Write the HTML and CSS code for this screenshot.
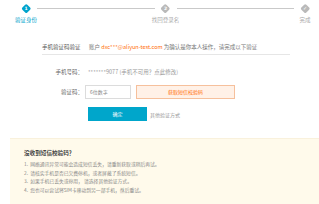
FILE: index.html
```html
<!DOCTYPE html>
<html lang="zh">
<head>
<meta charset="utf-8">
<link rel="stylesheet" href="styles.css">
</head>
<body>
<div class="page">
  <div class="steps">
    <div class="step active">
      <div class="dia"><span>1</span></div>
      <div class="lbl">验证身份</div>
    </div>
    <div class="line"></div>
    <div class="step">
      <div class="dia"><span>2</span></div>
      <div class="lbl">找回登录名</div>
    </div>
    <div class="line"></div>
    <div class="step">
      <div class="dia"><span class="chk">✓</span></div>
      <div class="lbl">完成</div>
    </div>
  </div>

  <div class="form">
    <div class="head">
      <span class="title">手机验证码验证</span>
      <span class="note">账户 <em>dxc***@aliyun-test.com</em> 为确认是你本人操作，请完成以下验证</span>
    </div>
    <div class="row phone">
      <span class="label">手机号码：</span>
      <span class="value">*******9077 (手机不可用？点此修改)</span>
    </div>
    <div class="row code">
      <span class="label">验证码：</span>
      <div class="input">6位数字</div>
      <div class="sms">获取短信校验码</div>
    </div>
    <div class="row submit">
      <span class="label"></span>
      <div class="ok">确定</div>
      <span class="other">其他验证方式</span>
    </div>
  </div>

  <div class="tips">
    <div class="tips-title">没收到短信校验码？</div>
    <ol class="tips-list">
      <li>1.&nbsp;&nbsp;网络通讯异常可能会造成短信丢失，请重新获取或稍后再试。</li>
      <li>2.&nbsp;&nbsp;请核实手机是否已欠费停机，或者屏蔽了系统短信。</li>
      <li>3.&nbsp;&nbsp;如果手机已丢失或停用， 请选择其他验证方式。</li>
      <li>4.&nbsp;&nbsp;您也可以尝试将SIM卡移动到另一部手机，然后重试。</li>
    </ol>
  </div>
</div>
</body>
</html>
```

FILE: styles.css
```css
html, body {
  margin: 0;
  padding: 0;
  background: #fff;
}
body {
  font-family: "Noto Sans CJK SC", "Noto Sans", sans-serif;
  color: #666;
  width: 319px;
  height: 204px;
  overflow: hidden;
}
.page {
  display: flex;
  flex-direction: column;
  height: 204px;
}

/* steps */
.steps {
  display: flex;
  align-items: flex-start;
  padding: 4px 3px 0 15px;
  height: 28px;
  box-sizing: border-box;
}
.step {
  width: 22px;
  display: flex;
  flex-direction: column;
  align-items: center;
}
.dia {
  width: 9px;
  height: 9px;
  display: flex;
  align-items: center;
  justify-content: center;
  position: relative;
}
.dia::before {
  content: "";
  width: 6.5px;
  height: 6.5px;
  border-radius: 1.5px;
  background: #b9b9b9;
  transform: rotate(45deg);
  position: absolute;
}
.step.active .dia::before {
  background: #00a3cc;
}
.dia span {
  position: relative;
  color: #fff;
  font-size: 4.5px;
  line-height: 5px;
  font-weight: bold;
  font-family: "DejaVu Sans", sans-serif;
}
.dia .chk {
  font-size: 5px;
}
.lbl {
  margin-top: 4px;
  font-size: 5.5px;
  line-height: 6px;
  white-space: nowrap;
  color: #aaa;
}
.step.active .lbl {
  color: #00a3cc;
}
.line {
  flex: 1;
  height: 1px;
  margin-top: 4px;
  background: #c9c9c9;
}

/* form */
.form {
  margin-left: 42px;
  width: 248px;
  display: flex;
  flex-direction: column;
}
.head {
  margin-top: 15px;
  padding-bottom: 3px;
  border-bottom: 1px solid #e6e6e6;
  display: flex;
  font-size: 5.5px;
  line-height: 8px;
  white-space: nowrap;
}
.title {
  color: #555;
  width: 47px;
}
.note {
  color: #777;
}
.note em {
  font-style: normal;
  color: #ff6a00;
}
.row {
  display: flex;
  align-items: center;
  font-size: 5.5px;
  white-space: nowrap;
}
.label {
  width: 41px;
  text-align: right;
  color: #666;
}
.phone {
  margin-top: 13px;
  line-height: 8px;
}
.phone .value {
  margin-left: 5px;
  color: #999;
}
.code {
  margin-top: 9px;
  height: 14px;
}
.input {
  margin-left: 2px;
  width: 46px;
  height: 14px;
  box-sizing: border-box;
  border: 1px solid #dcdcdc;
  padding-left: 4px;
  line-height: 12px;
  color: #888;
  font-size: 5px;
}
.sms {
  margin-left: 5px;
  width: 99px;
  height: 14px;
  box-sizing: border-box;
  border: 1px solid #f6c09c;
  background: #fff1e7;
  color: #ff6a00;
  font-size: 5px;
  line-height: 12px;
  text-align: center;
}
.submit {
  margin-top: 8px;
  height: 14px;
}
.ok {
  margin-left: 5px;
  width: 59px;
  height: 14px;
  background: #00a6cb;
  color: #fff;
  font-size: 5px;
  line-height: 14px;
  text-align: center;
}
.other {
  margin-left: 3px;
  color: #999;
  font-size: 5px;
}

/* tips */
.tips {
  margin-top: 17px;
  margin-left: 10px;
  flex: 1;
  background: #fffaeb;
  border-top: 1px solid #f9f1dc;
  padding: 10px 0 0 14px;
}
.tips-title {
  font-size: 5.6px;
  line-height: 8px;
  color: #444;
  font-weight: bold;
}
.tips-list {
  list-style: none;
  margin: 3px 0 0;
  padding: 0;
  font-size: 4.8px;
  line-height: 8.5px;
  color: #888;
  white-space: nowrap;
}
```
